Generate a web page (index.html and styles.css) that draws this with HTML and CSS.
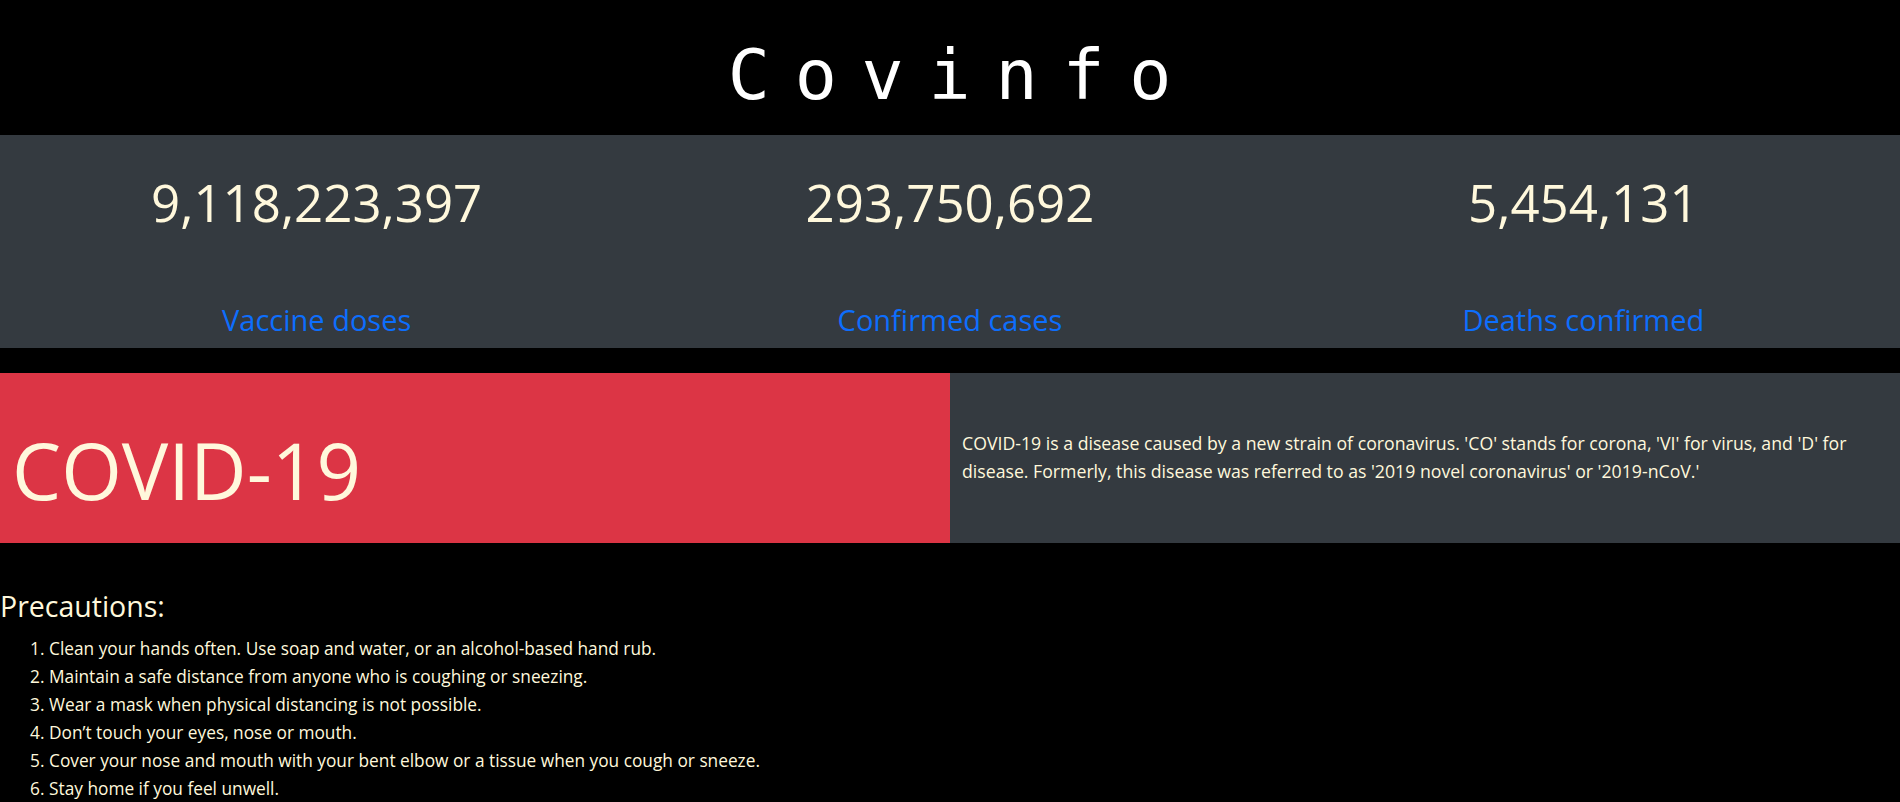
FILE: index.html
```html
<!DOCTYPE html>
<html lang="en">
<head>
<meta charset="utf-8">
<title>Covinfo</title>
<link rel="stylesheet" href="styles.css">
</head>
<body>
<header class="site-header">
  <h1 class="brand">Covinfo</h1>
</header>

<section class="stats">
  <div class="stat">
    <div class="stat-value">9,118,223,397</div>
    <a class="stat-label" href="#">Vaccine doses</a>
  </div>
  <div class="stat">
    <div class="stat-value">293,750,692</div>
    <a class="stat-label" href="#">Confirmed cases</a>
  </div>
  <div class="stat">
    <div class="stat-value">5,454,131</div>
    <a class="stat-label" href="#">Deaths confirmed</a>
  </div>
</section>

<section class="intro">
  <div class="intro-title">
    <h2 class="covid">COVID-19</h2>
  </div>
  <div class="intro-text">
    <p>COVID-19 is a disease caused by a new strain of coronavirus. 'CO' stands for corona, 'VI' for virus, and 'D' for disease. Formerly, this disease was referred to as '2019 novel coronavirus' or '2019-nCoV.'</p>
  </div>
</section>

<section class="precautions">
  <h3 class="prec-title">Precautions:</h3>
  <ol class="prec-list">
    <li>Clean your hands often. Use soap and water, or an alcohol-based hand rub.</li>
    <li>Maintain a safe distance from anyone who is coughing or sneezing.</li>
    <li>Wear a mask when physical distancing is not possible.</li>
    <li>Don’t touch your eyes, nose or mouth.</li>
    <li>Cover your nose and mouth with your bent elbow or a tissue when you cough or sneeze.</li>
    <li>Stay home if you feel unwell.</li>
  </ol>
</section>
</body>
</html>
```

FILE: styles.css
```css
html, body {
  margin: 0;
  padding: 0;
}

body {
  background: #000;
  color: #fff8dc;
  font-family: "Open Sans", "Noto Sans", sans-serif;
  overflow: hidden;
}

.site-header {
  height: 135px;
  box-sizing: border-box;
  padding-top: 40px;
  display: flex;
  justify-content: center;
}

.brand {
  margin: 0;
  padding-left: 24px;
  font-family: "DejaVu Sans Mono", monospace;
  font-weight: 400;
  font-size: 70px;
  line-height: 1;
  letter-spacing: 24.8px;
  color: #fff;
}

.stats {
  background: #343a40;
  display: grid;
  grid-template-columns: repeat(3, 1fr);
  padding: 42px 0 14px;
}

.stat {
  display: flex;
  flex-direction: column;
  align-items: center;
}

.stat-value {
  font-size: 51px;
  line-height: 1;
  margin-bottom: 77px;
  color: #fff8dc;
}

.stat-label {
  font-size: 29px;
  line-height: 1;
  color: #0d6efd;
  text-decoration: none;
}

.intro {
  margin-top: 25px;
  display: grid;
  grid-template-columns: 1fr 1fr;
  height: 170px;
}

.intro-title {
  background: #dc3545;
  padding: 58px 0 0 12px;
}

.covid {
  margin: 0;
  font-size: 78px;
  font-weight: 400;
  line-height: 1;
  color: #fff8dc;
}

.intro-text {
  background: #343a40;
  padding: 56px 12px 0 12px;
}

.intro-text p {
  margin: 0;
  font-size: 17.7px;
  line-height: 28px;
  color: #fff8dc;
}

.precautions {
  padding-top: 46px;
}

.prec-title {
  margin: 0;
  font-size: 28.5px;
  font-weight: 400;
  line-height: 1.2;
}

.prec-list {
  margin: 12px 0 0;
  padding-left: 49px;
  font-size: 17.3px;
  line-height: 28px;
}
```
